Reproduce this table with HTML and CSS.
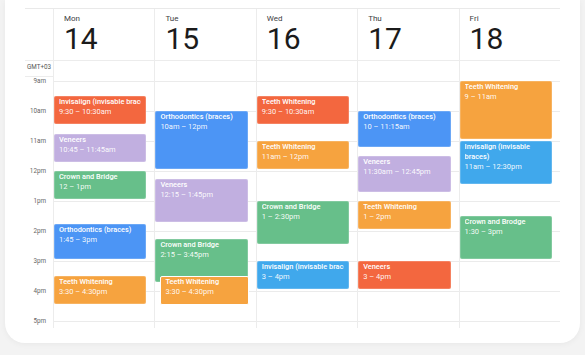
FILE: index.html
```html
<!DOCTYPE html>
<html>
<head>
<meta charset="utf-8">
<link rel="stylesheet" href="styles.css">
</head>
<body>
<div class="card">
  <div class="cal">
    <div class="gut-head"></div>
    <div class="day-head"><div class="dname">Mon</div><div class="dnum">14</div></div>
    <div class="day-head"><div class="dname">Tue</div><div class="dnum">15</div></div>
    <div class="day-head"><div class="dname">Wed</div><div class="dnum">16</div></div>
    <div class="day-head"><div class="dname">Thu</div><div class="dnum">17</div></div>
    <div class="day-head"><div class="dname">Fri</div><div class="dnum">18</div></div>

    <div class="gut-allday"><div class="tz">GMT+03</div></div>
    <div class="allday"></div>
    <div class="allday"></div>
    <div class="allday"></div>
    <div class="allday"></div>
    <div class="allday"></div>

    <div class="gut-body">
      <div class="slot"><span class="hl">9am</span></div>
      <div class="slot"><span class="hl">10am</span></div>
      <div class="slot"><span class="hl">11am</span></div>
      <div class="slot"><span class="hl">12pm</span></div>
      <div class="slot"><span class="hl">1pm</span></div>
      <div class="slot"><span class="hl">2pm</span></div>
      <div class="slot"><span class="hl">3pm</span></div>
      <div class="slot"><span class="hl">4pm</span></div>
      <div class="slot"><span class="hl">5pm</span></div>
    </div>

    <div class="day-body">
      <div class="ev red" style="top:15px;height:28px"><div class="et">Invisalign (invisable braces)</div><div class="tm">9:30 – 10:30am</div></div>
      <div class="ev purple" style="top:52.5px;height:28px"><div class="et">Veneers</div><div class="tm">10:45 – 11:45am</div></div>
      <div class="ev green" style="top:90px;height:28px"><div class="et">Crown and Bridge</div><div class="tm">12 – 1pm</div></div>
      <div class="ev blue" style="top:142.5px;height:35.5px"><div class="et">Orthodontics (braces)</div><div class="tm">1:45 – 3pm</div></div>
      <div class="ev orange" style="top:195px;height:28px"><div class="et">Teeth Whitening</div><div class="tm">3:30 – 4:30pm</div></div>
    </div>
    <div class="day-body">
      <div class="ev blue" style="top:30px;height:58px"><div class="et">Orthodontics (braces)</div><div class="tm">10am – 12pm</div></div>
      <div class="ev purple" style="top:97.5px;height:43px"><div class="et">Veneers</div><div class="tm">12:15 – 1:45pm</div></div>
      <div class="ev green" style="top:157.5px;height:43px"><div class="et">Crown and Bridge</div><div class="tm">2:15 – 3:45pm</div></div>
      <div class="ev orange stacked" style="top:195px;height:29px"><div class="et">Teeth Whitening</div><div class="tm">3:30 – 4:30pm</div></div>
    </div>
    <div class="day-body">
      <div class="ev red" style="top:15px;height:28px"><div class="et">Teeth Whitening</div><div class="tm">9:30 – 10:30am</div></div>
      <div class="ev orange" style="top:60px;height:28px"><div class="et">Teeth Whitening</div><div class="tm">11am – 12pm</div></div>
      <div class="ev green" style="top:120px;height:43px"><div class="et">Crown and Bridge</div><div class="tm">1 – 2:30pm</div></div>
      <div class="ev sky" style="top:180px;height:28px"><div class="et">Invisalign (invisable braces)</div><div class="tm">3 – 4pm</div></div>
    </div>
    <div class="day-body">
      <div class="ev blue" style="top:30px;height:35.5px"><div class="et">Orthodontics (braces)</div><div class="tm">10 – 11:15am</div></div>
      <div class="ev purple" style="top:75px;height:35.5px"><div class="et">Veneers</div><div class="tm">11:30am – 12:45pm</div></div>
      <div class="ev orange" style="top:120px;height:28px"><div class="et">Teeth Whitening</div><div class="tm">1 – 2pm</div></div>
      <div class="ev red" style="top:180px;height:28px"><div class="et">Veneers</div><div class="tm">3 – 4pm</div></div>
    </div>
    <div class="day-body">
      <div class="ev orange" style="top:0px;height:58px"><div class="et">Teeth Whitening</div><div class="tm">9 – 11am</div></div>
      <div class="ev sky" style="top:60px;height:43px"><div class="et wrap">Invisalign (invisable braces)</div><div class="tm">11am – 12:30pm</div></div>
      <div class="ev green" style="top:135px;height:43px"><div class="et">Crown and Brodge</div><div class="tm">1:30 – 3pm</div></div>
    </div>
  </div>
</div>
</body>
</html>
```
FILE: styles.css
```css
* { box-sizing: border-box; }
html, body { margin: 0; padding: 0; }
body {
  background: #f3f3f3;
  font-family: Roboto, "Noto Sans", "Liberation Sans", sans-serif;
  width: 585px;
  height: 355px;
  overflow: hidden;
}
.card {
  margin: 0 5px;
  height: 343px;
  background: #fff;
  border-radius: 0 0 20px 20px;
  padding: 8px 20px 0 20px;
  box-shadow: 0 1px 6px rgba(0,0,0,0.05);
}
.cal {
  display: grid;
  grid-template-columns: 28px repeat(5, 1fr);
  grid-template-rows: 52px 20px 247px;
  width: 535px;
  border-top: 1px solid #e9e9e9;
}
.gut-head {
  border-bottom: 1px solid #ececec;
}
.day-head {
  border-left: 1px solid #ececec;
  border-bottom: 1px solid #ececec;
  padding: 4px 0 0 10px;
  color: #202124;
}
.dname {
  font-size: 8px;
  line-height: 12px;
  color: #3c4043;
}
.dnum {
  font-size: 30px;
  line-height: 28px;
  color: #1b1b1b;
}
.gut-allday {
  display: flex;
  flex-direction: column;
}
.tz {
  height: 16px;
  border-bottom: 1px solid #ececec;
  font-size: 6.3px;
  line-height: 13px;
  text-align: center;
  color: #555;
}
.allday {
  border-left: 1px solid #ececec;
}
.gut-body {
  display: flex;
  flex-direction: column;
}
.slot {
  height: 30px;
  flex: none;
  text-align: right;
  padding-right: 7px;
}
.hl {
  display: block;
  margin-top: -4px;
  font-size: 6.3px;
  line-height: 8px;
  color: #666;
}
.day-body {
  position: relative;
  border-left: 1px solid #ececec;
  background: repeating-linear-gradient(to bottom, #ebebeb 0, #ebebeb 1px, transparent 1px, transparent 30px);
}
.ev {
  position: absolute;
  left: 0;
  right: 8px;
  border-radius: 2px;
  padding: 1px 5px;
  color: #fff;
  overflow: hidden;
  box-shadow: inset 0 0 0 1px rgba(255,255,255,0.18);
}
.ev.stacked {
  left: 5px;
  right: 7px;
  border: 1px solid #fff;
  box-shadow: none;
  padding: 0 4px;
}
.et {
  font-size: 7.4px;
  line-height: 10px;
  font-weight: 500;
  white-space: nowrap;
  overflow: hidden;
}
.et.wrap { white-space: normal; }
.tm {
  font-size: 7.5px;
  line-height: 10px;
  white-space: nowrap;
  color: rgba(255,255,255,0.95);
}
.red { background: #f3673f; }
.orange { background: #f6a33f; }
.purple { background: #c1afe0; }
.green { background: #67bf8a; }
.blue { background: #4c95f5; }
.sky { background: #40a8ec; }
```
